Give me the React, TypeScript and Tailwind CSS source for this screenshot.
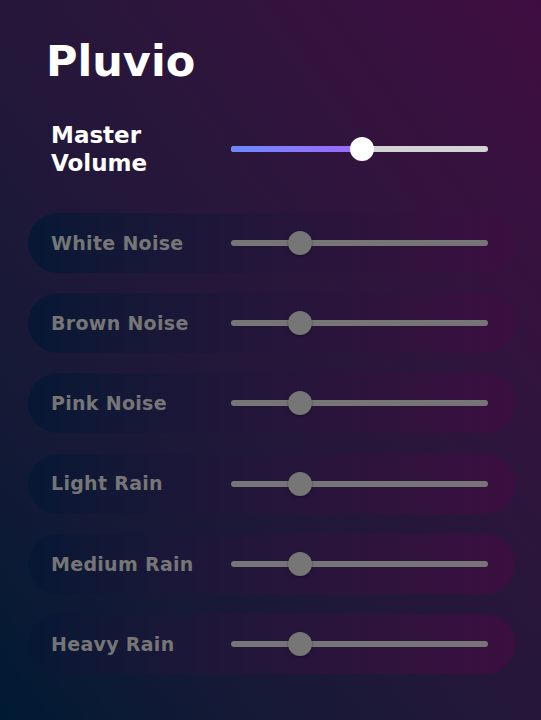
import React from 'react';

interface SliderProps {
  value: number;
  active?: boolean;
}

const TRACK_WIDTH = 257;

// custom-drawn range slider, value is 0..1
const Slider: React.FC<SliderProps> = ({ value, active = false }) => {
  const pos = Math.round(value * TRACK_WIDTH);

  return (
    <div className="relative flex h-6 w-[257px] items-center">
      <div
        className={
          active
            ? 'h-[6px] w-full rounded-full bg-[#d3d3d3]'
            : 'h-[6px] w-full rounded-full bg-[#767676]'
        }
      />
      {active && (
        <div
          className="absolute left-0 h-[6px] rounded-l-full bg-linear-to-r from-[#6a88ff] to-[#9b68fb]"
          style={{ width: pos }}
        />
      )}
      <div
        className={
          active
            ? 'absolute top-0 h-6 w-6 -translate-x-1/2 rounded-full bg-white'
            : 'absolute top-0 h-6 w-6 -translate-x-1/2 rounded-full bg-[#767676] shadow-[0_1px_3px_rgba(0,0,0,0.35)]'
        }
        style={{ left: pos }}
      />
    </div>
  );
};

const sounds = [
  { name: 'White Noise', volume: 0.27 },
  { name: 'Brown Noise', volume: 0.27 },
  { name: 'Pink Noise', volume: 0.27 },
  { name: 'Light Rain', volume: 0.27 },
  { name: 'Medium Rain', volume: 0.27 },
  { name: 'Heavy Rain', volume: 0.27 },
];

export default function App() {
  return (
    <div
      className="min-h-screen w-full bg-linear-to-tr from-[#001a33] to-[#3f0c41] pl-[28px] pr-[26px] pt-[39px] pb-[46px]"
      style={{ fontFamily: '"DejaVu Sans", "Noto Sans", sans-serif' }}
    >
      <h1 className="ml-[18px] text-[43px] font-bold leading-[44px] text-white">Pluvio</h1>

      {/* Master volume */}
      <div className="mt-[38px] flex h-[56px] items-center pl-[23px]">
        <div className="w-[180px] text-[23px] font-bold leading-[28px] text-white">
          Master
          <br />
          Volume
        </div>
        <Slider value={0.51} active />
      </div>

      {/* Individual sounds */}
      <div className="mt-[36px] flex flex-col gap-[20.2px]">
        {sounds.map((s) => (
          <div
            key={s.name}
            className="flex h-[60px] items-center rounded-full bg-linear-to-r from-[#061834] to-[#3b0e40] pl-[23px]"
          >
            <div className="w-[180px] text-[19px] font-bold tracking-[0.3px] text-[#767676]">{s.name}</div>
            <Slider value={s.volume} />
          </div>
        ))}
      </div>
    </div>
  );
}
